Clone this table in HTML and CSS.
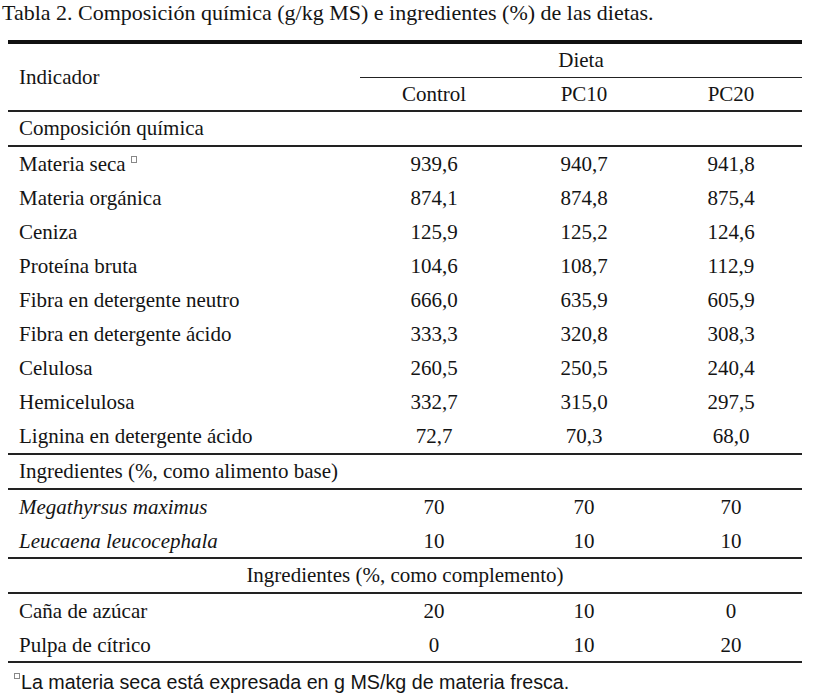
FILE: index.html
```html
<!DOCTYPE html>
<html lang="es">
<head>
<meta charset="utf-8">
<title>Tabla 2</title>
<link rel="stylesheet" href="styles.css">
</head>
<body>
<div class="page">
  <p class="caption">Tabla 2. Composición química (g/kg MS) e ingredientes (%) de las dietas.</p>
  <table class="data">
    <colgroup>
      <col class="c-label">
      <col class="c-val1">
      <col class="c-val2">
      <col class="c-val3">
    </colgroup>
    <thead>
      <tr class="h1">
        <th rowspan="2" class="lbl ind">Indicador</th>
        <th colspan="3" class="dieta">Dieta</th>
      </tr>
      <tr class="h2">
        <th>Control</th>
        <th>PC10</th>
        <th>PC20</th>
      </tr>
    </thead>
    <tbody>
      <tr class="sec"><td class="lbl" colspan="4">Composición química</td></tr>
      <tr class="chem"><td class="lbl">Materia seca<span class="box"></span></td><td>939,6</td><td>940,7</td><td>941,8</td></tr>
      <tr class="chem"><td class="lbl">Materia orgánica</td><td>874,1</td><td>874,8</td><td>875,4</td></tr>
      <tr class="chem"><td class="lbl">Ceniza</td><td>125,9</td><td>125,2</td><td>124,6</td></tr>
      <tr class="chem"><td class="lbl">Proteína bruta</td><td>104,6</td><td>108,7</td><td>112,9</td></tr>
      <tr class="chem"><td class="lbl">Fibra en detergente neutro</td><td>666,0</td><td>635,9</td><td>605,9</td></tr>
      <tr class="chem"><td class="lbl">Fibra en detergente ácido</td><td>333,3</td><td>320,8</td><td>308,3</td></tr>
      <tr class="chem"><td class="lbl">Celulosa</td><td>260,5</td><td>250,5</td><td>240,4</td></tr>
      <tr class="chem"><td class="lbl">Hemicelulosa</td><td>332,7</td><td>315,0</td><td>297,5</td></tr>
      <tr class="chem end"><td class="lbl">Lignina en detergente ácido</td><td>72,7</td><td>70,3</td><td>68,0</td></tr>
      <tr class="sec"><td class="lbl" colspan="4">Ingredientes (%, como alimento base)</td></tr>
      <tr class="ing"><td class="lbl"><em>Megathyrsus maximus</em></td><td>70</td><td>70</td><td>70</td></tr>
      <tr class="ing end"><td class="lbl"><em>Leucaena leucocephala</em></td><td>10</td><td>10</td><td>10</td></tr>
      <tr class="sec"><td class="mid" colspan="4">Ingredientes (%, como complemento)</td></tr>
      <tr class="ing"><td class="lbl">Caña de azúcar</td><td>20</td><td>10</td><td>0</td></tr>
      <tr class="ing end"><td class="lbl">Pulpa de cítrico</td><td>0</td><td>10</td><td>20</td></tr>
    </tbody>
  </table>
  <p class="note"><span class="box"></span>La materia seca está expresada en g MS/kg de materia fresca.</p>
</div>
</body>
</html>
```

FILE: styles.css
```css
html, body {
  margin: 0;
  padding: 0;
  background: #fff;
}

.page {
  width: 818px;
  color: #141414;
  font-family: "Liberation Serif", "Times New Roman", serif;
}

.caption {
  margin: 0;
  padding: 1px 0 0 2px;
  height: 40px;
  box-sizing: border-box;
  line-height: 24px;
  font-size: 22px;
}

.data {
  margin-left: 8px;
  width: 794px;
  border-collapse: separate;
  border-spacing: 0;
  border-top: 4px solid #111;
  font-size: 21px;
}

.c-label { width: 352px; }
.c-val1 { width: 148px; }
.c-val2 { width: 152px; }
.c-val3 { width: 142px; }

.data th,
.data td {
  font-weight: normal;
  text-align: center;
  vertical-align: middle;
  line-height: 24px;
  padding: 0;
}

.data .lbl {
  text-align: left;
  padding-left: 11px;
}

.h1 th {
  padding-top: 4px;
  padding-bottom: 5px;
}

.h1 .ind {
  padding-top: 0;
  padding-bottom: 0;
  border-bottom: 2px solid #222;
}

.dieta {
  border-bottom: 1px solid #222;
}

.h2 th {
  padding-top: 4px;
  padding-bottom: 4px;
  border-bottom: 2px solid #222;
}

.sec td {
  padding-top: 4px;
  padding-bottom: 5px;
  border-bottom: 2px solid #222;
}

.chem td {
  padding-top: 5px;
  padding-bottom: 5px;
}

.ing td {
  padding-top: 5px;
  padding-bottom: 4.5px;
}

.end td {
  border-bottom: 2px solid #222;
}

.box {
  display: inline-block;
  width: 4px;
  height: 5px;
  border: 1px solid #888;
  vertical-align: 8px;
  margin-left: 5px;
}

.note {
  margin: 0;
  padding: 8px 0 0 14px;
  font-family: "Liberation Sans", Arial, sans-serif;
  font-size: 19.7px;
  line-height: 22px;
}

.note .box {
  width: 4px;
  height: 4px;
  vertical-align: 10px;
  margin: 0 1px 0 0;
}
```
